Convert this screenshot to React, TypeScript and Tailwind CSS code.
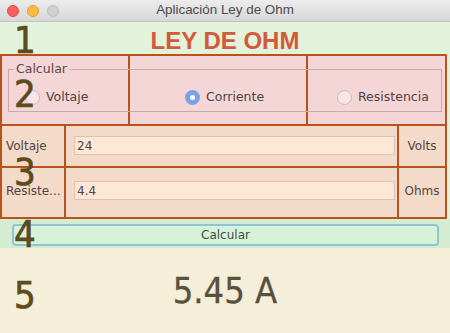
import React from 'react'

// Ventana "Aplicación Ley de Ohm" con las regiones numeradas encima

function Radio({ label, checked }: { label: string; checked?: boolean }) {
  return (
    <div className="flex items-center gap-[6px]">
      {checked ? (
        <span className="w-[15px] h-[15px] rounded-full bg-[#7ba3e4] flex items-center justify-center">
          <span className="w-[5px] h-[5px] rounded-full bg-white" />
        </span>
      ) : (
        <span className="w-[15px] h-[15px] rounded-full bg-[#fbe4e6] border border-[#cbb7b9]" />
      )}
      <span className="text-[12.5px] text-[#4f4242] leading-none">{label}</span>
    </div>
  )
}

const bigNum = "absolute left-[14px] text-[38px] leading-[38px] text-[#5b4b1d] [-webkit-text-stroke:0.7px_#5b4b1d] font-['DejaVu_Sans_Condensed','DejaVu_Sans',sans-serif] [font-stretch:condensed] pointer-events-none"

export default function App() {
  return (
    <div className="relative w-[450px] h-[333px] overflow-hidden bg-[#e3f2da] font-['DejaVu_Sans',sans-serif]">
      {/* Barra de título */}
      <div className="relative h-[22px] flex items-center justify-center bg-gradient-to-b from-[#ececec] to-[#d7d7d7] border-b border-[#c4c4c4]">
        <div className="absolute left-[7px] top-[5px] flex gap-[8px]">
          <span className="w-[12px] h-[12px] rounded-full bg-[#fc605c] border border-[#e04a45]" />
          <span className="w-[12px] h-[12px] rounded-full bg-[#fdbc40] border border-[#de9f34]" />
          <span className="w-[12px] h-[12px] rounded-full bg-[#d0d0d0] border border-[#bdbdbd]" />
        </div>
        <span className="text-[13.4px] text-[#4b4b4b] font-['Liberation_Sans',sans-serif]">Aplicación Ley de Ohm</span>
      </div>

      {/* 1: encabezado */}
      <div className="h-[32px] flex items-center justify-center">
        <span className="text-[24px] font-bold text-[#d3593b] font-['Liberation_Sans',sans-serif] leading-none pt-[5px]">LEY DE OHM</span>
      </div>

      {/* 2: opciones */}
      <div className="relative w-[447px] h-[72px] border-2 border-[#b8531d] bg-[#f4d6d7] grid grid-cols-[128px_178px_1fr]">
        <div className="border-r-2 border-[#b8531d] flex items-center pl-[23px] pt-[15px]">
          <Radio label="Voltaje" />
        </div>
        <div className="border-r-2 border-[#b8531d] flex items-center pl-[55px] pt-[15px]">
          <Radio label="Corriente" checked />
        </div>
        <div className="flex items-center pl-[29px] pt-[15px]">
          <Radio label="Resistencia" />
        </div>
        <div className="absolute left-[6px] top-[13px] w-[434px] h-[43px] border border-[#c9aaac] pointer-events-none">
          <span className="absolute left-[5px] top-[-9px] px-[2px] bg-[#f4d6d7] text-[12.5px] leading-[16px] text-[#5a4848]">Calcular</span>
        </div>
      </div>

      {/* 3: datos */}
      <div className="w-[447px] border-2 border-t-0 border-[#b8531d] bg-[#f3dac9] grid grid-cols-[64px_333px_1fr] grid-rows-[40px_2px_49px] text-[12px] text-[#524343]">
        <div className="border-r-2 border-[#b8531d] flex items-center pl-[4px]">Voltaje</div>
        <div className="border-r-2 border-[#b8531d] pl-[8px] pr-[2px] pt-[10px]">
          <div className="h-[19px] bg-[#fde7d7] border border-[#dcc3b3] flex items-center pl-[2px]">24</div>
        </div>
        <div className="flex items-center justify-center">Volts</div>
        <div className="col-span-3 bg-[#b8531d]" />
        <div className="border-r-2 border-[#b8531d] flex items-start pt-[14px] pl-[4px] overflow-hidden whitespace-nowrap">Resiste...</div>
        <div className="border-r-2 border-[#b8531d] pl-[8px] pr-[2px] pt-[13px]">
          <div className="h-[19px] bg-[#fde7d7] border border-[#dcc3b3] flex items-center pl-[2px]">4.4</div>
        </div>
        <div className="flex items-start justify-center pt-[14px]">Ohms</div>
      </div>

      {/* 4: botón */}
      <div className="h-[29px] bg-[#d4ecd2] pt-[5px] pl-[12px] pr-[11px]">
        <button className="w-full h-[22px] rounded-[4px] border-2 border-[#8fc5cf] bg-[#d6f3d9] text-[12px] text-[#3f4e45] flex items-center justify-center leading-none">
          Calcular
        </button>
      </div>

      {/* 5: resultado */}
      <div className="h-[85px] bg-[#f5eed8] flex items-center justify-center">
        <span className="text-[36px] leading-none text-[#58513f] [-webkit-text-stroke:0.3px_#58513f] font-['DejaVu_Sans_Condensed','DejaVu_Sans',sans-serif] [font-stretch:condensed]">5.45 A</span>
      </div>

      {/* números de región */}
      <span className={bigNum + " top-[21px]"}>1</span>
      <span className={bigNum + " top-[75px]"}>2</span>
      <span className={bigNum + " top-[153px]"}>3</span>
      <span className={bigNum + " top-[215px]"}>4</span>
      <span className={bigNum + " top-[276px]"}>5</span>
    </div>
  )
}
